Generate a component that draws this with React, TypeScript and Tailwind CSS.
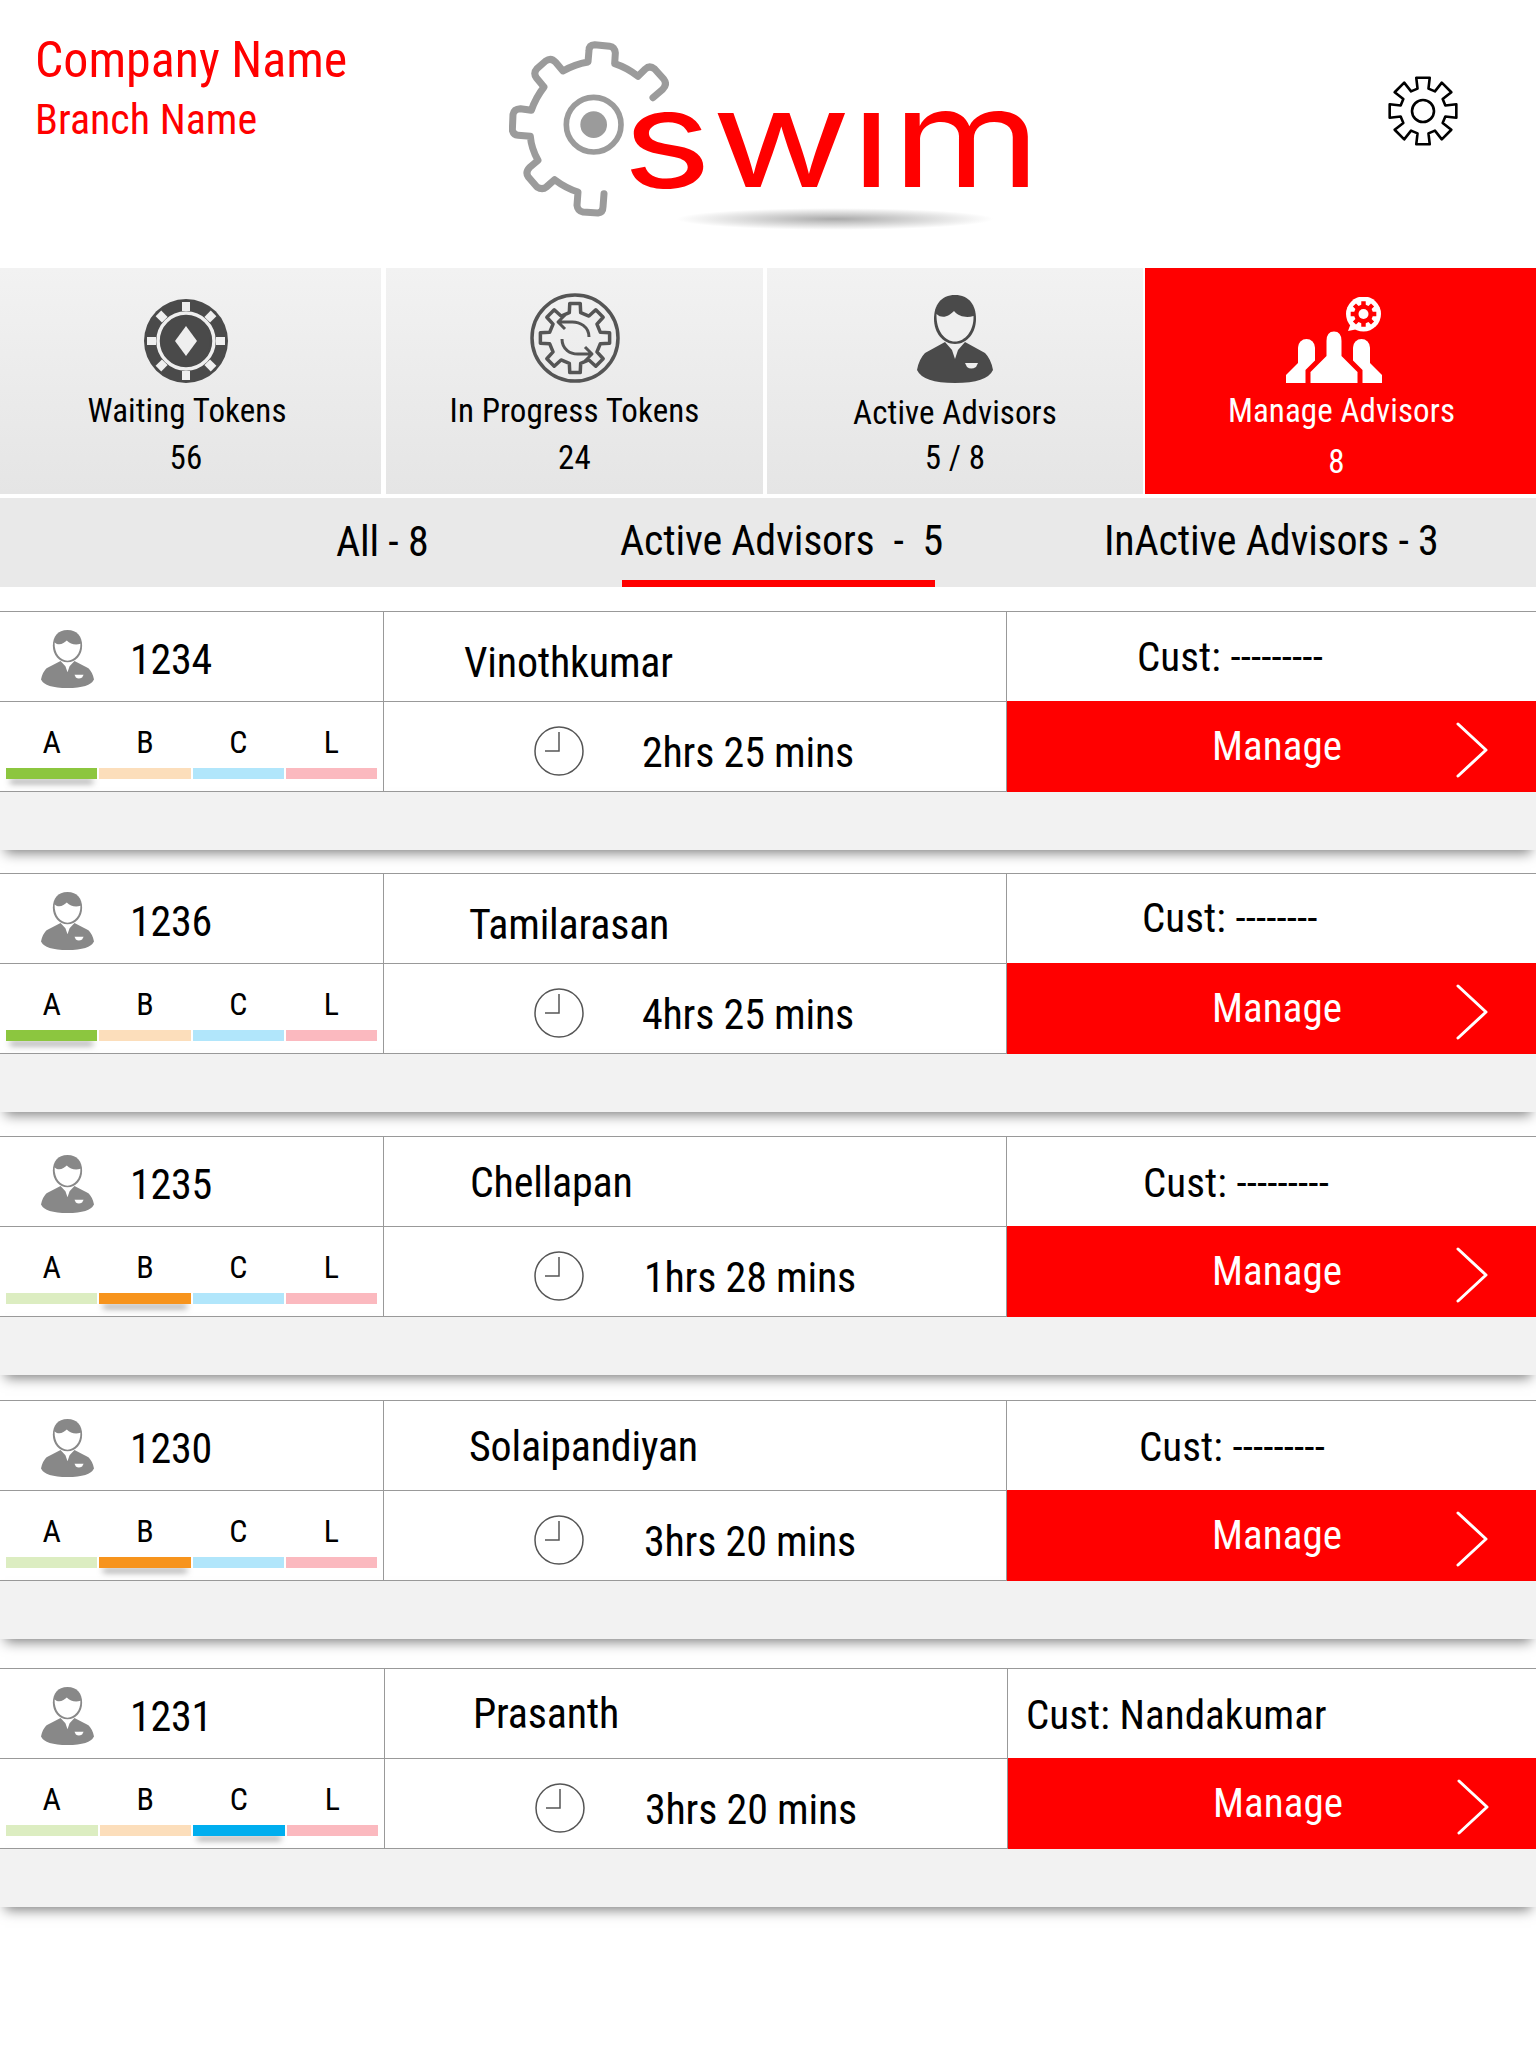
import React from "react";

const FONT = "[font-family:Roboto,'Liberation_Sans',sans-serif] [font-stretch:75%]";

function gearPath(cx: number, cy: number, rOut: number, rIn: number, n: number, tip: number, root: number) {
  const pts: string[] = [];
  for (let i = 0; i < n; i++) {
    const a = (i * 2 * Math.PI) / n - Math.PI / 2;
    const p = (r: number, d: number) => `${(cx + r * Math.cos(a + d)).toFixed(2)} ${(cy + r * Math.sin(a + d)).toFixed(2)}`;
    pts.push(p(rIn, -root), p(rOut, -tip), p(rOut, tip), p(rIn, root));
  }
  return "M" + pts.join("L") + "Z";
}

function Person({ className, fill, face }: { className: string; fill: string; face: string }) {
  return (
    <svg viewBox="0 0 76 88" preserveAspectRatio="none" className={className}>
      <path fill={fill} d="M28 47L8 58Q2 64 0 75Q6 88 38 88Q70 88 76 75Q74 64 68 58L48 47L41 55L38 64L35 55Z" />
      <path fill={fill} d="M38 0C52 0 59 10 59 24C59 38 50 49 38 49C26 49 17 38 17 24C17 10 24 0 38 0Z" />
      <path fill={face} d="M19.5 19C26 25 33 20 37 16C42 22 50 23 56.5 21C57 36 48 46.5 38 46.5C28 46.5 19 36 19.5 19Z" />
      <path fill={face} d="M48 68H61L59 72Q54 75 50 72Z" />
    </svg>
  );
}

function LogoGear() {
  return (
    <svg viewBox="0 0 480 540" className="w-[160px] h-[180px] shrink-0">
      <path
        transform="translate(-88 -50)"
        fill="none"
        stroke="#9b9b9b"
        strokeWidth="21"
        strokeLinecap="round"
        strokeLinejoin="round"
        d="M520 232L549 207Q564 192 552 176L525 146Q510 134 497 146L475 168Q442 142 405 130L407 98Q405 80 390 78L345 73Q328 74 328 90L325 125Q285 132 250 152L228 126Q214 110 198 122L172 145Q160 158 170 172L193 200Q168 232 155 270L122 265Q103 266 100 282L98 330Q102 344 115 345L152 348Q155 385 175 420L150 441Q136 456 146 470L172 500Q188 510 200 500L225 478Q258 503 295 515L292 555Q294 572 310 575L355 578Q370 576 370 560L373 520"
      />
      <circle cx="254" cy="263" r="82" fill="none" stroke="#9b9b9b" strokeWidth="17" />
      <circle cx="254" cy="263" r="40" fill="#9b9b9b" />
    </svg>
  );
}

function SettingsGear() {
  return (
    <svg viewBox="0 0 72 72" className="w-[72px] h-[72px]">
      <path d={gearPath(36, 36, 34, 23, 8, 0.2, 0.24)} fill="none" stroke="#000" strokeWidth="2.6" strokeLinejoin="round" />
      <circle cx="36" cy="36" r="11" fill="none" stroke="#000" strokeWidth="2.6" />
    </svg>
  );
}

function ChipIcon() {
  const squares = [0, 45, 90, 135, 180, 225, 270, 315];
  return (
    <svg viewBox="0 0 84 84" className="w-[84px] h-[84px]">
      <circle cx="42" cy="42" r="42" fill="#4a4a4a" />
      {squares.map((a) => (
        <rect key={a} x="38" y="3" width="8" height="9" fill="#efefef" transform={`rotate(${a} 42 42)`} />
      ))}
      <circle cx="42" cy="42" r="28" fill="none" stroke="#efefef" strokeWidth="3.5" />
      <circle cx="42" cy="42" r="24" fill="#4a4a4a" />
      <path d="M42 27L53 42L42 57L31 42Z" fill="#efefef" />
    </svg>
  );
}

function SyncGearIcon() {
  return (
    <svg viewBox="0 0 90 90" className="w-[90px] h-[90px]" fill="none" stroke="#555" strokeLinejoin="round">
      <circle cx="45" cy="45" r="43" strokeWidth="3.5" />
      <path d={gearPath(45, 45, 35, 26, 8, 0.15, 0.22)} strokeWidth="3.5" />
      <path d="M59 44C59 34 50 28 40 29L29 29M35 22L28 29L35 36" strokeWidth="3" />
      <path d="M32 46C32 56 40 62 50 61L62 61M55 54L62 61L55 68" strokeWidth="3" />
    </svg>
  );
}

function ManageIcon() {
  return (
    <svg viewBox="0 0 96 86" className="w-[96px] h-[86px]">
      <g fill="#fff">
        <rect x="12" y="42" width="17" height="36" rx="8.5" />
        <path d="M14 64L0 78V86H22L30 70Z" />
        <rect x="67" y="42" width="17" height="36" rx="8.5" />
        <path d="M82 64L96 78V86H74L66 70Z" />
        <path stroke="#f00" strokeWidth="5" d="M38 58V44C38 36 42 32 48 32C54 32 58 36 58 44V58L74 74V90H22V74Z" />
        <circle cx="77.5" cy="17" r="17.5" />
        <path d="M65 26L62 34L72 32Z" />
      </g>
      <path d={gearPath(77.5, 17, 13, 9.5, 8, 0.17, 0.24)} fill="#f00" />
      <circle cx="77.5" cy="17" r="5" fill="#fff" />
    </svg>
  );
}

function ClockIcon() {
  return (
    <svg viewBox="0 0 50 50" className="w-[50px] h-[50px] shrink-0" fill="none" stroke="#555" strokeWidth="1.5">
      <circle cx="25" cy="25" r="24" />
      <path d="M25 6V25H11" />
    </svg>
  );
}

const Chevron = () => (
  <svg viewBox="0 0 32 56" className="w-[32px] h-[56px] mt-[7px] shrink-0" fill="none" stroke="#fff" strokeWidth="3" strokeLinecap="round" strokeLinejoin="round">
    <path d="M2 2L30 28L2 54" />
  </svg>
);

function Stat({ icon, label, value, cell, iconBox, labelCls, valueCls }: { icon: React.ReactNode; label: string; value: string; cell: string; iconBox: string; labelCls: string; valueCls: string }) {
  return (
    <div className={`flex flex-col items-center h-full tracking-[0.1px] ${cell}`}>
      <div className={`flex items-end justify-center ${iconBox}`}>{icon}</div>
      <div className={`text-[33px] leading-[40px] whitespace-nowrap ${labelCls}`}>{label}</div>
      <div className={`text-[33px] leading-[40px] whitespace-nowrap ${valueCls}`}>{value}</div>
    </div>
  );
}

type Row = {
  num: string; name: string; time: string; cust: string; active: number;
  grid: string; nameCls: string; custCls: string; timeCls: string; mb: string;
};

const rows: Row[] = [
  { num: "1234", name: "Vinothkumar", time: "2hrs 25 mins", cust: "Cust: ---------", active: 0, grid: "grid-cols-[384px_623px_1fr]", nameCls: "pl-[80px] pt-[12px]", custCls: "pl-[130px] pt-[1px]", timeCls: "ml-[58px]", mb: "mb-[23px]" },
  { num: "1236", name: "Tamilarasan", time: "4hrs 25 mins", cust: "Cust: --------", active: 0, grid: "grid-cols-[384px_623px_1fr]", nameCls: "pl-[85px] pt-[12px]", custCls: "pl-[135px]", timeCls: "ml-[58px]", mb: "mb-[24px]" },
  { num: "1235", name: "Chellapan", time: "1hrs 28 mins", cust: "Cust: ---------", active: 1, grid: "grid-cols-[384px_623px_1fr]", nameCls: "pl-[86px] pt-[2px]", custCls: "pl-[136px] pt-[3px]", timeCls: "ml-[60px]", mb: "mb-[25px]" },
  { num: "1230", name: "Solaipandiyan", time: "3hrs 20 mins", cust: "Cust: ---------", active: 1, grid: "grid-cols-[384px_623px_1fr]", nameCls: "pl-[85px] pt-[2px]", custCls: "pl-[132px] pt-[3px]", timeCls: "ml-[60px]", mb: "mb-[29px]" },
  { num: "1231", name: "Prasanth", time: "3hrs 20 mins", cust: "Cust: Nandakumar", active: 2, grid: "grid-cols-[385px_623px_1fr]", nameCls: "pl-[88px]", custCls: "pl-[18px] pt-[3px]", timeCls: "ml-[60px]", mb: "" },
];

const letters = ["A", "B", "C", "L"];
const faded = ["bg-[#dcedc1]", "bg-[#fcdebb]", "bg-[#b1e6fb]", "bg-[#fbb9bf]"];
const strong = ["bg-[#8cc63f]", "bg-[#f7941d]", "bg-[#00aeef]", "bg-[#fbb9bf]"];

function AdvisorRow({ r }: { r: Row }) {
  return (
    <div className={r.mb}>
      <div className={`grid ${r.grid} grid-rows-[90px_90px] border-t border-[#999]`}>
        <div className="flex items-center pl-[41px] border-r border-b border-[#999]">
          <Person className="w-[53px] h-[58px] mt-[5px] shrink-0" fill="#888" face="#fff" />
          <span className="ml-[36px] text-[42px] pt-[7px] leading-none">{r.num}</span>
        </div>
        <div className={`flex items-center border-r border-b border-[#999] text-[42px] leading-none ${r.nameCls}`}>{r.name}</div>
        <div className={`flex items-center border-b border-[#999] text-[41px] leading-none tracking-[0.1px] ${r.custCls}`}>{r.cust}</div>

        <div className="flex flex-col border-r border-b border-[#999] px-[6px]">
          <div className="flex gap-[2px] pt-[24px]">
            {letters.map((l) => (
              <div key={l} className="flex-1 text-center text-[32px] leading-[32px]">{l}</div>
            ))}
          </div>
          <div className="flex gap-[2px] mt-[10px]">
            {letters.map((l, i) => (
              <div
                key={l}
                className={`flex-1 h-[11px] ${i === r.active ? strong[i] + " shadow-[0_8px_6px_-4px_rgba(0,0,0,0.55)]" : faded[i]}`}
              />
            ))}
          </div>
        </div>
        <div className="flex items-center pl-[150px] pt-[8px] border-r border-b border-[#999]">
          <ClockIcon />
          <span className={`text-[42px] leading-none pt-[4px] ${r.timeCls}`}>{r.time}</span>
        </div>
        <div className="flex items-center bg-[#f00] text-white -mt-px">
          <span className="ml-[205px] w-[244px] text-[41px] leading-none tracking-[0.1px]">Manage</span>
          <Chevron />
        </div>
      </div>
      <div className="h-[58px] bg-[#f2f2f2] shadow-[0_8px_12px_-5px_rgba(0,0,0,0.5)]" />
    </div>
  );
}

export default function App() {
  return (
    <div className={`w-[1536px] h-[2048px] bg-white text-black font-normal tracking-[-0.2px] ${FONT}`}>
      <header className="flex h-[268px] items-start">
        <div className="w-[509px] shrink-0 pl-[35px] pt-[29px] text-[#f00] tracking-normal">
          <div className="text-[50px] leading-[62px]">Company Name</div>
          <div className="text-[42px] leading-[58px]">Branch Name</div>
        </div>
        <div className="relative w-[530px] shrink-0 pt-[37px]">
          <LogoGear />
          <div className="absolute left-[113px] top-[70px] text-[#f00] [font-family:Inter,sans-serif] font-normal text-[136px] leading-none tracking-normal [font-stretch:100%]">
            <span className="inline-block origin-left scale-x-[1.25] whitespace-nowrap">swim</span>
          </div>
          <div className="absolute left-[340px] top-[60px] w-[50px] h-[50px] bg-white" />
          <div className="absolute left-[166px] top-[208px] w-[320px] h-[22px] bg-[radial-gradient(ellipse_at_center,#aaaaaa_0%,transparent_70%)]" />
        </div>
        <div className="ml-[348px] pt-[75px]">
          <SettingsGear />
        </div>
      </header>

      <section className="flex h-[226px] text-[33px]">
        <div className="w-[381px] mr-[5px] bg-gradient-to-b from-[#f2f2f2] to-[#e5e5e5]">
          <Stat cell="pr-[7px]" iconBox="h-[115px] pr-[3px]" labelCls="pt-[8px]" valueCls="pt-[7px] pr-[2px]" icon={<ChipIcon />} label="Waiting Tokens" value="56" />
        </div>
        <div className="w-[377px] mr-[4px] bg-gradient-to-b from-[#f2f2f2] to-[#e5e5e5]">
          <Stat cell="" iconBox="h-[115px]" labelCls="pt-[8px]" valueCls="pt-[7px]" icon={<SyncGearIcon />} label="In Progress Tokens" value="24" />
        </div>
        <div className="w-[376px] mr-[2px] bg-gradient-to-b from-[#f2f2f2] to-[#e5e5e5]">
          <Stat cell="" iconBox="h-[115px]" labelCls="pt-[10px]" valueCls="pt-[5px]" icon={<Person className="w-[76px] h-[88px]" fill="#4a4a4a" face="#efefef" />} label="Active Advisors" value="5 / 8" />
        </div>
        <div className="flex-1 bg-[#f00] text-white">
          <Stat cell="pl-[2px]" iconBox="h-[115px] pr-[16px]" labelCls="pt-[8px]" valueCls="pt-[11px] pr-[10px]" icon={<ManageIcon />} label="Manage Advisors" value="8" />
        </div>
      </section>

      <nav className="flex h-[89px] mt-[4px] bg-[#e9e9e9] text-[42px] leading-none">
        <div className="ml-[336px] pt-[23px] w-[284px] shrink-0">All - 8</div>
        <div className="flex flex-col w-[315px] shrink-0 whitespace-pre">
          <div className="pt-[22px]">{"Active Advisors  -  5"}</div>
          <div className="mt-auto ml-[2px] h-[7px] w-[313px] bg-[#f00] shadow-[0_11px_8px_-6px_rgba(0,0,0,0.6)]" />
        </div>
        <div className="ml-[169px] pt-[22px] whitespace-nowrap">InActive Advisors - 3</div>
      </nav>

      <main className="mt-[24px]">
        {rows.map((r) => (
          <AdvisorRow key={r.num} r={r} />
        ))}
      </main>
    </div>
  );
}
